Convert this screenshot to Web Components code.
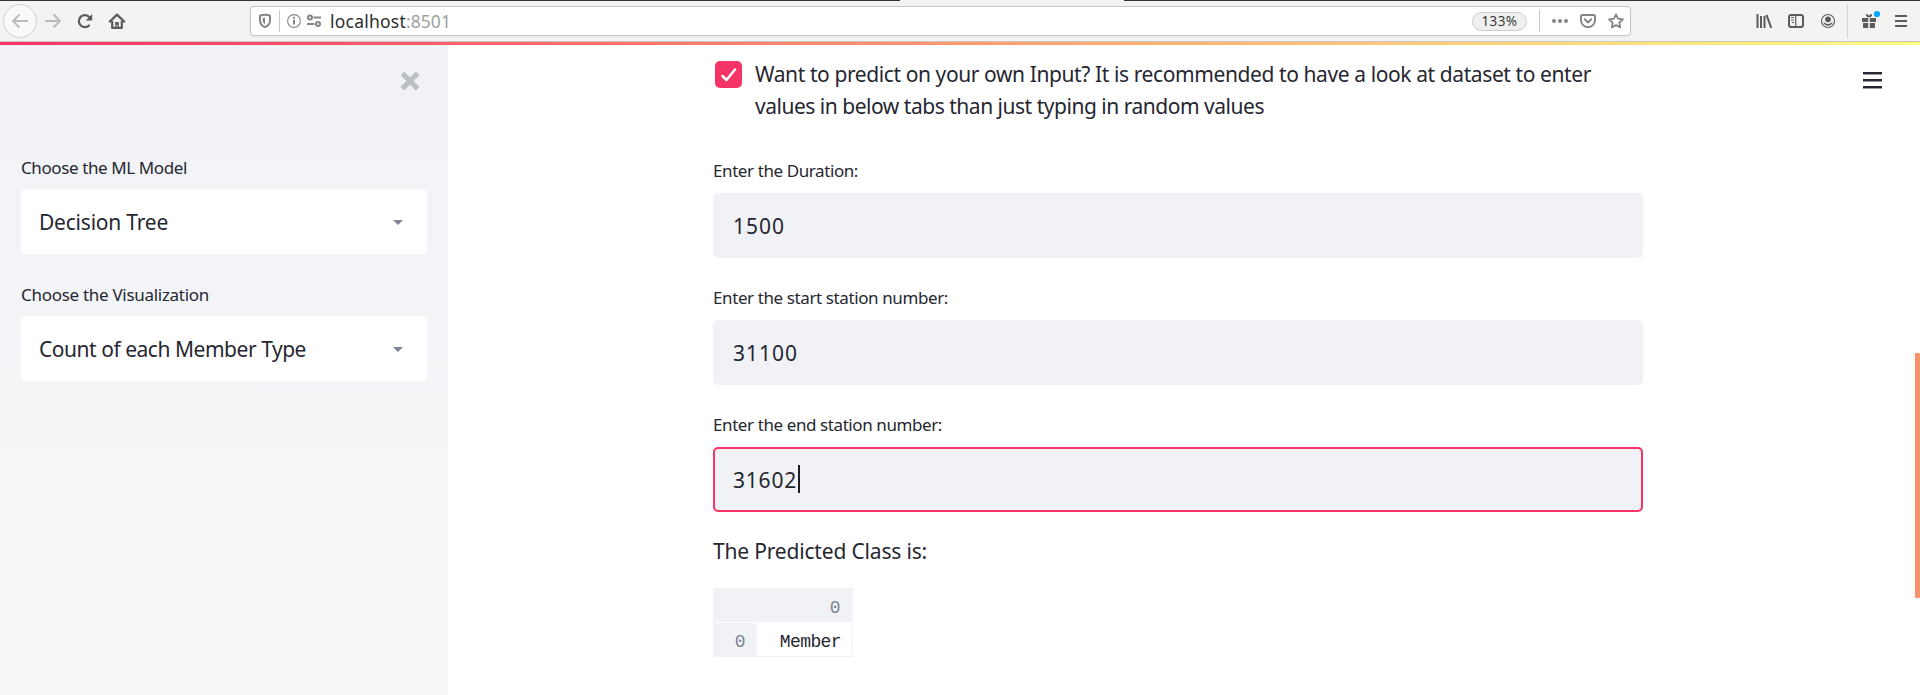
<!DOCTYPE html>
<html lang="en">
<head>
<meta charset="utf-8">
<title>localhost:8501</title>
<style>
html,body{margin:0;height:100%;overflow:hidden;background:#fff}
body{font-family:"Noto Sans",sans-serif;color:#262730}
</style>
</head>
<body>
<app-window></app-window>
<script>
const define = (name, html, setup) => {
  const t = document.createElement('template');
  t.innerHTML = html;
  customElements.define(name, class extends HTMLElement {
    connectedCallback() {
      if (this.shadowRoot) return;
      this.attachShadow({mode: 'open'}).append(t.content.cloneNode(true));
      if (setup) setup(this, this.shadowRoot);
    }
  });
};

/* One line of text, tracked so that it spans the width given in "w". */
define('fit-text', `<style>:host{display:inline-block;white-space:nowrap}span{display:inline-block}</style><span><slot></slot></span>`,
  (el, root) => {
    const s = root.querySelector('span'), w = +el.getAttribute('w');
    el.style.width = w + 'px';
    s.style.letterSpacing = (w - s.getBoundingClientRect().width) / el.textContent.length + 'px';
  });

const icons = {
  back: `<path d="M16 8H1.5M7.5 1.5 1 8l6.500 6.500" fill="none" stroke="#bbbbba" stroke-width="2"/>`,
  forward: `<path d="M0 8h14.500M8.500 1.500 15 8l-6.500 6.500" fill="none" stroke="#bbbbba" stroke-width="2"/>`,
  reload: `<path d="M12.600 11.800A6 6 0 1 1 12.400 4.200" fill="none" stroke="#5c5c5b" stroke-width="2.200"/><path d="M15.200 1v6.500H8.700z" fill="#5c5c5b"/>`,
  home: `<path d="M.8 8.600 8 1.600l7.200 7" fill="none" stroke="#5c5c5b" stroke-width="2.200" stroke-linecap="round" stroke-linejoin="round"/><path d="M3.200 8v6.900h9.600V8" fill="none" stroke="#5c5c5b" stroke-width="2.200" stroke-linejoin="round"/><path d="M6.200 14.500V9h3.600v5.500z" fill="#5c5c5b"/><rect x="7.400" y="12" width="1.200" height="1.500" fill="#f4f3f2"/>`,
  shield: `<path d="M8 1.700c-1.800 0-3.500.4-5 1v4.800c0 3.300 2 5.400 5 6.700 3-1.300 5-3.400 5-6.700V2.700c-1.500-.6-3.200-1-5-1z" fill="none" stroke="#858585" stroke-width="2"/><path d="M8 4.600c-.9 0-1.700.2-2.300.4v2.600c0 1.600.8 2.900 2.300 3.800z" fill="#858585"/>`,
  info: `<circle cx="8" cy="8" r="6.400" fill="none" stroke="#858585" stroke-width="1.100"/><path d="M8 7v4.500" stroke="#858585" stroke-width="2"/><circle cx="8" cy="4.800" r="1.150" fill="#858585"/>`,
  perms: `<g fill="none" stroke="#858585" stroke-width="2"><circle cx="4" cy="4.500" r="2"/><path d="M7.500 4.500H15"/><circle cx="12" cy="11" r="2"/><path d="M1 11h7.500"/></g>`,
  dots: `<g fill="#858585"><circle cx="2" cy="8" r="2"/><circle cx="8" cy="8" r="2"/><circle cx="14" cy="8" r="2"/></g>`,
  pocket: `<path d="M1 3.500q0-1.500 1.500-1.500h11q1.500 0 1.500 1.500V7.200a7 7 0 0 1-14 0z" fill="none" stroke="#858585" stroke-width="2"/><path d="m4.800 6.300 3.200 3.200 3.200-3.200" fill="none" stroke="#858585" stroke-width="2" stroke-linecap="round" stroke-linejoin="round"/>`,
  star: `<path d="m8 1.400 2 4.300 4.900.6-3.600 3.300.9 4.800L8 12l-4.200 2.400.9-4.800L1.100 6.300 6 5.700z" fill="none" stroke="#858585" stroke-width="1.800" stroke-linejoin="round"/>`,
  library: `<path d="M1.500 1v14M5 3v12M8.500 3v12" stroke="#5c5c5b" stroke-width="2"/><path d="m10.500 1.800 4.700 13" stroke="#5c5c5b" stroke-width="2"/>`,
  sidebar: `<rect x="1" y="2" width="14" height="12" rx="2" fill="none" stroke="#5c5c5b" stroke-width="2"/><path d="M7.700 2v12" stroke="#5c5c5b" stroke-width="1.200"/><path d="M3 4.500h3M3 7h3M4 9.500h2" stroke="#5c5c5b" stroke-width="1"/>`,
  account: `<circle cx="8" cy="8" r="6.500" fill="none" stroke="#5c5c5b" stroke-width="1.100"/><circle cx="8" cy="6.300" r="2.900" fill="#5c5c5b"/><path d="M3.400 9.300c.8 0 1.400.3 2 .9 1.500 1 3.700 1 5.200 0 .6-.6 1.200-.9 2-.9-.7 2.200-2.400 3.400-4.600 3.400s-3.900-1.200-4.600-3.400z" fill="#5c5c5b"/>`,
  gift: `<path d="M1 5h6.200v4H1zM8.800 5H15v4H8.800zM2 10h5.200v5H3a1 1 0 0 1-1-1zM8.800 10H14v4a1 1 0 0 1-1 1H8.800z" fill="#5c5c5b"/><path d="M4.800 1.500q1.900-.8 3.200 1.200 1.300-2 3.200-1.200.3 1.800-1.600 2.700H6.400Q4.500 3.300 4.800 1.500z" fill="#5c5c5b"/><circle cx="16" cy="1" r="3.100" fill="#00a8fa"/>`,
  menu: `<path d="M2 3h12M2 8h12M2 13h12" stroke="#5c5c5b" stroke-width="2"/>`,
  close: `<path d="m1.200 1.200 13.600 13.600M14.800 1.200 1.200 14.800" stroke="#bcbfc4" stroke-width="4.600"/>`,
  check: `<path d="m1.500 9 4 4L14 2.500" fill="none" stroke="#fff" stroke-width="2.500" stroke-linecap="round" stroke-linejoin="round"/>`
};
define('ui-icon', `<style>:host{display:block;flex:none;width:16px;height:16px}svg{display:block;width:100%;height:100%;overflow:visible}</style><svg viewBox="0 0 16 16"></svg>`,
  (el, root) => { root.querySelector('svg').innerHTML = icons[el.getAttribute('name')]; });

define('browser-bar', `<style>
:host{display:block;height:42px;box-sizing:border-box;background:#f4f3f2;border-bottom:1px solid #c9c6c3}
.edge{height:1px;background:linear-gradient(90deg,#36322e 900px,#f4f3f2 900px 1124px,#36322e 1124px)}
.row{display:flex;height:40px;align-items:center}
.back{box-sizing:border-box;display:flex;align-items:center;justify-content:center;width:34px;height:34px;border:1px solid #d3d1cf;border-radius:50%;background:#faf9f9;margin-left:3px}
.url{box-sizing:border-box;display:flex;align-items:center;width:1381px;height:30px;margin-left:125px;background:#fff;border:1px solid #c8c4bf;border-radius:4px;font-size:17.500px;line-height:28px;box-shadow:0 1px 3px #0000000d}
.sep{width:1px;height:22px;background:#c9c9c9;flex:none}
.port{color:#a0a0a0}
.host{color:#2c2c2c}
.zoom{box-sizing:border-box;width:55px;height:19px;border:1px solid #cfcecd;border-radius:10px;background:#f0f0f0;font-size:13.500px;line-height:17px;text-align:center;color:#3b3b3b;margin-left:auto}
</style><div class="edge"></div><div class="row">
<div class="back"><ui-icon name="back"></ui-icon></div>
<ui-icon name="forward" style="margin-left:8px"></ui-icon>
<ui-icon name="reload" style="margin-left:16px"></ui-icon>
<ui-icon name="home" style="margin-left:16px"></ui-icon>
<div class="url">
<ui-icon name="shield" style="margin-left:6px"></ui-icon>
<div class="sep" style="margin-left:6px"></div>
<ui-icon name="info" style="margin-left:6px"></ui-icon>
<ui-icon name="perms" style="margin-left:4px"></ui-icon>
<fit-text class="host" w="76" style="margin-left:8px">localhost</fit-text><fit-text class="port" w="45">:8501</fit-text>
<div class="zoom"><fit-text w="36">133%</fit-text></div>
<div class="sep" style="margin-left:12px"></div>
<ui-icon name="dots" style="margin-left:12px"></ui-icon>
<ui-icon name="pocket" style="margin-left:12px"></ui-icon>
<ui-icon name="star" style="margin:0 6px 0 12px"></ui-icon>
</div>
<ui-icon name="library" style="margin-left:125px"></ui-icon>
<ui-icon name="sidebar" style="margin-left:16px"></ui-icon>
<ui-icon name="account" style="margin-left:16px"></ui-icon>
<div class="sep" style="margin-left:11px;height:34px;background:#d6d4d2"></div>
<ui-icon name="gift" style="margin-left:13px"></ui-icon>
<ui-icon name="menu" style="margin-left:16px"></ui-icon>
</div>`);

define('select-field', `<style>
:host{display:block;height:127px}
.label{box-sizing:border-box;font-size:17px;line-height:24px;height:34px;padding-top:1px}
.box{box-sizing:border-box;display:flex;align-items:center;justify-content:space-between;height:65px;padding:1px 24px 0 18px;background:#fff;border-radius:5px;font-size:21px}
.arrow{width:10px;height:5px;margin-top:1px;background:#808495;clip-path:polygon(0 0,100% 0,50% 100%)}
</style><div class="label"><slot name="label"></slot></div><div class="box"><slot></slot><div class="arrow"></div></div>`);

define('side-bar', `<style>
:host{display:flex;flex-direction:column;flex:none;box-sizing:border-box;width:448px;padding:26.500px 21px 0;background:linear-gradient(#f0f2f6,#f7f8f9)}
ui-icon{width:18px;height:18px;align-self:flex-end;margin:0 8px 65.500px 0}
</style><ui-icon name="close"></ui-icon>
<select-field><fit-text slot="label" w="166">Choose the ML Model</fit-text><fit-text w="129">Decision Tree</fit-text></select-field>
<select-field><fit-text slot="label" w="188">Choose the Visualization</fit-text><fit-text w="267">Count of each Member Type</fit-text></select-field>`);

define('check-field', `<style>
:host{display:flex;gap:13px;font-size:21px;line-height:32px;padding-left:2px}
.box{display:flex;align-items:center;justify-content:center;width:27px;height:27px;margin-top:3px;border-radius:5px;background:#f63366}
.text{display:flex;flex-direction:column}
</style><div class="box"><ui-icon name="check"></ui-icon></div><div class="text"><slot></slot></div>`);

define('input-field', `<style>
:host{display:block;height:127px}
.label{box-sizing:border-box;font-size:17px;line-height:24px;height:35px;padding-top:1px}
.box{box-sizing:border-box;display:flex;align-items:center;height:65px;padding:0 18px;border:2px solid #f0f2f6;background:#f0f2f6;border-radius:5px;font-size:21px}
:host([focused]) .box{border-color:#f63366}
:host([focused]) .box::after{content:"";width:2px;height:28px;background:#1c1d28;margin-left:1px;margin-top:-1px}
</style><div class="label"><slot name="label"></slot></div><div class="box"><slot></slot></div>`);

define('data-table', `<style>
:host{display:grid;grid-template-columns:43px 95px;grid-template-rows:33px 34px;box-sizing:border-box;width:140px;height:69px;border:1px solid #f0f2f6;font:18px/34px "Liberation Mono",monospace;letter-spacing:-.6px;text-align:right}
div{box-sizing:border-box;padding-right:12px}
.head{grid-column:1/3;background:#f0f2f6;color:#808495;line-height:38px;height:33px}
.idx{background:#f0f2f6;color:#808495;margin-top:1px;line-height:38px;height:33px}
.val{line-height:40px;height:34px;padding-right:11px}
</style><div class="head">0</div><div class="idx">0</div><div class="val">Member</div>`);

define('main-view', `<style>
:host{display:flex;flex:1;min-width:0}
.form{width:930px;margin-left:265px;padding-top:13px}
.fields{margin-top:36px}
.result{font-size:21px;line-height:32px;margin-top:-4px;height:53px}
.menu{width:19px;height:17px;display:flex;flex-direction:column;justify-content:space-between;margin:27px 33px 0 220px}
.menu i{height:2px;background:#262730;border-bottom:.5px solid #9a9aa0}
.thumb{width:5px;height:245px;margin-top:308px;background:#f6936b;border-radius:1px}
</style><div class="form">
<check-field><fit-text w="836">Want to predict on your own Input? It is recommended to have a look at dataset to enter</fit-text><fit-text w="509">values in below tabs than just typing in random values</fit-text></check-field>
<div class="fields">
<input-field><fit-text slot="label" w="145">Enter the Duration:</fit-text><fit-text w="52">1500</fit-text></input-field>
<input-field><fit-text slot="label" w="235">Enter the start station number:</fit-text><fit-text w="65">31100</fit-text></input-field>
<input-field focused><fit-text slot="label" w="229">Enter the end station number:</fit-text><fit-text w="64">31602</fit-text></input-field>
</div>
<div class="result"><fit-text w="214">The Predicted Class is:</fit-text></div>
<data-table></data-table>
</div>
<div class="menu"><i></i><i></i><i></i></div>
<div class="thumb"></div>`);

define('app-window', `<style>
:host{display:flex;flex-direction:column;height:100vh}
.accent{height:3px;flex:none;background:linear-gradient(90deg,#f63366,#ff6b6b 30%,#ffb071 60%,#fffd80)}
.page{display:flex;flex:1;min-height:0}
</style><browser-bar></browser-bar><div class="accent"></div><div class="page"><side-bar></side-bar><main-view></main-view></div>`);
</script>
</body>
</html>
